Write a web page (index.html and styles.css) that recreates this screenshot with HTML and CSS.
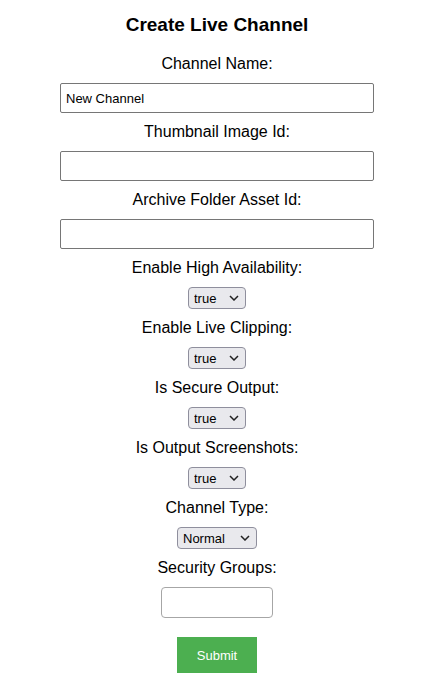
FILE: index.html
```html
<!DOCTYPE html>
<html>
<head>
<meta charset="utf-8">
<link rel="stylesheet" href="styles.css">
</head>
<body>
<form class="form">
  <h2 class="title">Create Live Channel</h2>
  <label class="label">Channel Name:</label>
  <input class="text-input" type="text" value="New Channel">
  <label class="label">Thumbnail Image Id:</label>
  <input class="text-input" type="text">
  <label class="label">Archive Folder Asset Id:</label>
  <input class="text-input" type="text">
  <label class="label">Enable High Availability:</label>
  <span class="select-wrap select-bool"><select class="select"><option>true</option><option>false</option></select><svg class="chevron" width="10" height="6" viewBox="0 0 10 6"><path d="M1 1 L5 5 L9 1" fill="none" stroke="#222" stroke-width="1.5"/></svg></span>
  <label class="label">Enable Live Clipping:</label>
  <span class="select-wrap select-bool"><select class="select"><option>true</option><option>false</option></select><svg class="chevron" width="10" height="6" viewBox="0 0 10 6"><path d="M1 1 L5 5 L9 1" fill="none" stroke="#222" stroke-width="1.5"/></svg></span>
  <label class="label">Is Secure Output:</label>
  <span class="select-wrap select-bool"><select class="select"><option>true</option><option>false</option></select><svg class="chevron" width="10" height="6" viewBox="0 0 10 6"><path d="M1 1 L5 5 L9 1" fill="none" stroke="#222" stroke-width="1.5"/></svg></span>
  <label class="label">Is Output Screenshots:</label>
  <span class="select-wrap select-bool"><select class="select"><option>true</option><option>false</option></select><svg class="chevron" width="10" height="6" viewBox="0 0 10 6"><path d="M1 1 L5 5 L9 1" fill="none" stroke="#222" stroke-width="1.5"/></svg></span>
  <label class="label">Channel Type:</label>
  <span class="select-wrap select-type"><select class="select"><option>Normal</option><option>Premium</option></select><svg class="chevron" width="10" height="6" viewBox="0 0 10 6"><path d="M1 1 L5 5 L9 1" fill="none" stroke="#222" stroke-width="1.5"/></svg></span>
  <label class="label">Security Groups:</label>
  <textarea class="textarea"></textarea>
  <button class="submit" type="button">Submit</button>
</form>
</body>
</html>
```
FILE: styles.css
```css
html, body {
  margin: 0;
  padding: 0;
  background: #ffffff;
}
body {
  font-family: "Liberation Sans", Arial, sans-serif;
  color: #000;
}
.form {
  display: flex;
  flex-direction: column;
  align-items: center;
  gap: 10px;
  padding-top: 13px;
  padding-right: 12px;
}
.title {
  font-size: 19px;
  font-weight: bold;
  margin: 0 0 9px 0;
  line-height: 23px;
}
.label {
  font-size: 16px;
  line-height: 18px;
}
.text-input {
  box-sizing: border-box;
  width: 314px;
  height: 30px;
  border: 1px solid #767676;
  border-radius: 2px;
  padding: 0 5px;
  font-family: "Liberation Sans", Arial, sans-serif;
  font-size: 13px;
  color: #000;
  margin: 0;
}
.select-wrap {
  position: relative;
  display: block;
  height: 22px;
}
.select-bool {
  width: 58px;
}
.select-type {
  width: 80px;
}
.select {
  -webkit-appearance: none;
  appearance: none;
  box-sizing: border-box;
  width: 100%;
  height: 100%;
  margin: 0;
  padding: 0 0 0 5px;
  border: 1px solid #8f8f9d;
  border-radius: 4px;
  background: #e9e9ed;
  font-family: "Liberation Sans", Arial, sans-serif;
  font-size: 13px;
  color: #000;
}
.chevron {
  position: absolute;
  right: 7px;
  top: 8px;
  pointer-events: none;
}
.textarea {
  box-sizing: border-box;
  width: 112px;
  height: 31px;
  border: 1px solid #a6a6a6;
  border-radius: 4px;
  margin: 0;
  resize: none;
}
.submit {
  margin-top: 9px;
  width: 80px;
  height: 36px;
  border: none;
  border-radius: 0;
  background: #4caf50;
  color: #fff;
  font-family: "Liberation Sans", Arial, sans-serif;
  font-size: 13px;
}
```
